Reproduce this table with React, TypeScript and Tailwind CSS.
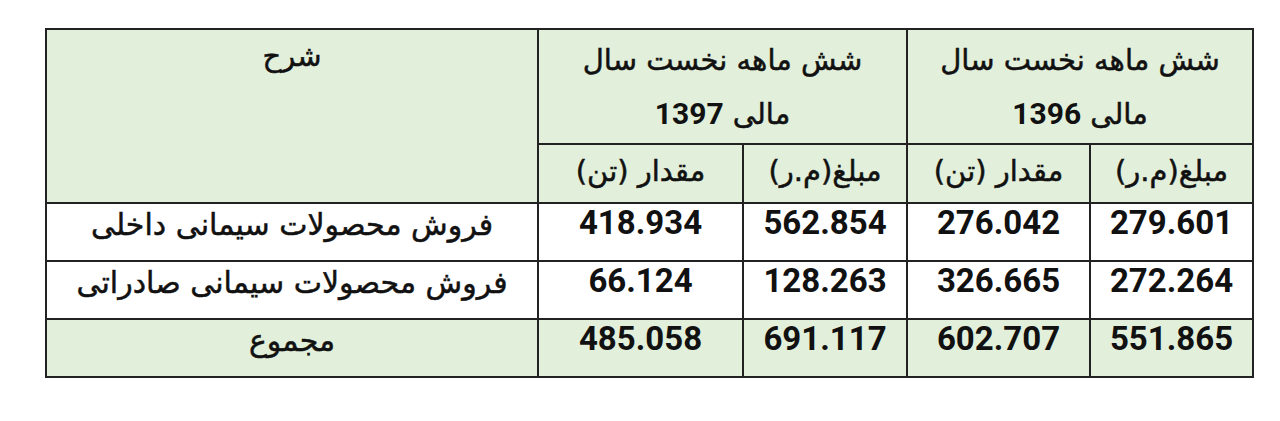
import React from 'react';

const rows = [
  { label: 'فروش محصولات سیمانی داخلی', v: ['418.934', '562.854', '276.042', '279.601'], total: false },
  { label: 'فروش محصولات سیمانی صادراتی', v: ['66.124', '128.263', '326.665', '272.264'], total: false },
  { label: 'مجموع', v: ['485.058', '691.117', '602.707', '551.865'], total: true },
];

// Arabic-script text: DejaVu with a hairline stroke to thicken it a bit
const fa = "font-['DejaVu_Sans',sans-serif] [-webkit-text-stroke:0.5px_#111]";
const num = "font-['Roboto',sans-serif] font-bold [-webkit-text-stroke:0px]";

function App() {
  return (
    <div className="min-h-screen bg-white pt-[28px] pl-[45px]">
      <table className="table-fixed border-collapse border-2 border-[#222] text-[#111] w-[1207px]">
        <colgroup>
          <col className="w-[492px]" />
          <col className="w-[205px]" />
          <col className="w-[164px]" />
          <col className="w-[183px]" />
          <col className="w-[163px]" />
        </colgroup>
        <thead>
          <tr className="h-[115px] bg-[#e2efda]">
            <td rowSpan={2} dir="rtl" className={`${fa} text-[29px] leading-[40px] border-2 border-[#222] text-center align-top pt-[6px]`}>
              شرح
            </td>
            <td colSpan={2} dir="rtl" className={`${fa} text-[29px] leading-[54px] border-2 border-[#222] text-center`}>
              شش ماهه نخست سال
              <br />
              مالی <span className={`${num} text-[30px]`}>1397</span>
            </td>
            <td colSpan={2} dir="rtl" className={`${fa} text-[29px] leading-[54px] border-2 border-[#222] text-center`}>
              شش ماهه نخست سال
              <br />
              مالی <span className={`${num} text-[30px]`}>1396</span>
            </td>
          </tr>
          <tr className="h-[59px] bg-[#e2efda]">
            <td dir="rtl" className={`${fa} text-[29px] leading-[40px] pb-[6px] border-2 border-[#222] text-center`}>مقدار (تن)</td>
            <td dir="rtl" className={`${fa} text-[29px] leading-[40px] pb-[6px] border-2 border-[#222] text-center`}>مبلغ(م.ر)</td>
            <td dir="rtl" className={`${fa} text-[29px] leading-[40px] pb-[6px] border-2 border-[#222] text-center`}>مقدار (تن)</td>
            <td dir="rtl" className={`${fa} text-[29px] leading-[40px] pb-[6px] border-2 border-[#222] text-center`}>مبلغ(م.ر)</td>
          </tr>
        </thead>
        <tbody>
          {rows.map((r) => (
            <tr key={r.label} className={`h-[58px] ${r.total ? 'bg-[#e2efda]' : 'bg-white'}`}>
              <td dir="rtl" className={`${fa} text-[30px] leading-[36px] pb-[14px] border-2 border-[#222] text-center`}>{r.label}</td>
              {r.v.map((x, i) => (
                <td key={i} className={`${num} text-[33px] leading-[36px] pb-[18px] border-2 border-[#222] text-center`}>{x}</td>
              ))}
            </tr>
          ))}
        </tbody>
      </table>
    </div>
  );
}

export default App;
